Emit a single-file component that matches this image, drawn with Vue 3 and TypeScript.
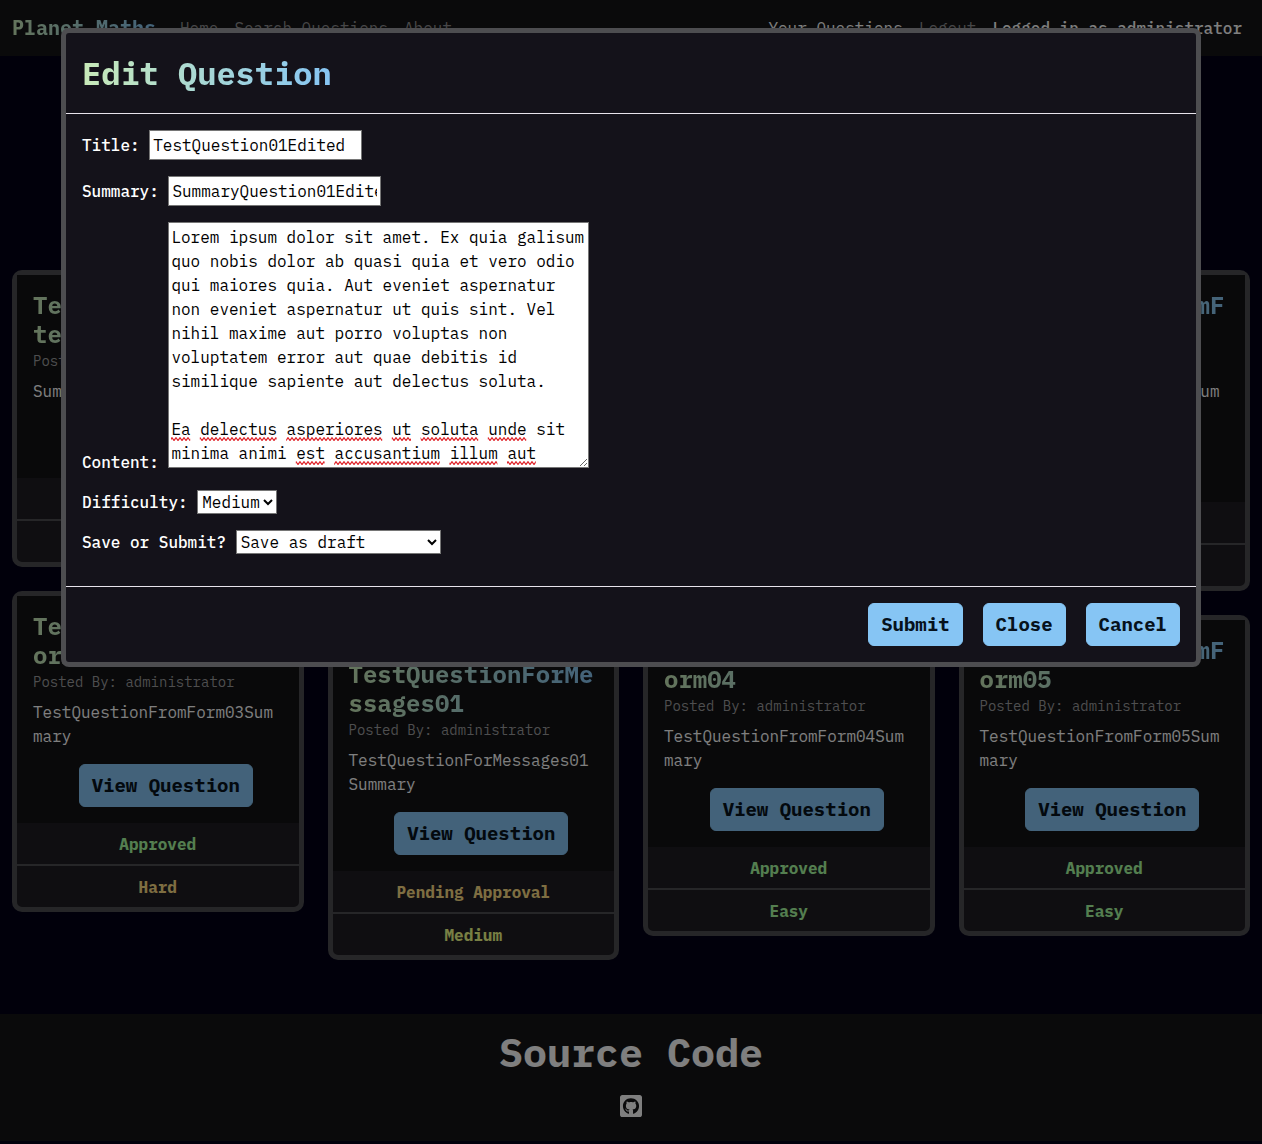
<script setup lang="ts">
import { ref } from 'vue'

type Tone = 'green' | 'yellow' | 'lime'

interface Question {
  title: string
  summary: string
  status: string
  statusTone: Tone
  difficulty: string
  difficultyTone: Tone
}

function question(
  title: string,
  summary: string,
  difficulty: string,
  difficultyTone: Tone,
  status = 'Approved',
  statusTone: Tone = 'green',
): Question {
  return { title, summary, status, statusTone, difficulty, difficultyTone }
}

const columns: Question[][] = [
  [
    question('TestQuestion01Edited', 'SummaryQuestion01Edited', 'Medium', 'lime'),
    question('TestQuestionFromForm03', 'TestQuestionFromForm03Summary', 'Hard', 'yellow'),
  ],
  [
    question('TestQuestionFromForm', 'TestQuestionFromFormSummary for the TestQuestionFromForm', 'Easy', 'green'),
    question('TestQuestionForMessages01', 'TestQuestionForMessages01 Summary', 'Medium', 'lime', 'Pending Approval', 'yellow'),
  ],
  [
    question('TestQuestionFromForm01', 'TestQuestionFromForm01Summary', 'Easy', 'green'),
    question('TestQuestionFromForm04', 'TestQuestionFromForm04Summary', 'Easy', 'green'),
  ],
  [
    question('TestQuestionFromForm02', 'TestQuestionFromForm02Summary', 'Easy', 'green'),
    question('TestQuestionFromForm05', 'TestQuestionFromForm05Summary', 'Easy', 'green'),
  ],
]

const title = ref('TestQuestion01Edited')
const summary = ref('SummaryQuestion01Edited')
const difficulty = ref('Medium')
const saveMode = ref('Save as draft')

const lines = [
  'Lorem ipsum dolor sit amet. Ex quia galisum',
  'quo nobis dolor ab quasi quia et vero odio',
  'qui maiores quia. Aut eveniet aspernatur',
  'non eveniet aspernatur ut quis sint. Vel',
  'nihil maxime aut porro voluptas non',
  'voluptatem error aut quae debitis id',
  'similique sapiente aut delectus soluta.',
  '',
  'Ea delectus asperiores ut soluta unde sit',
  'minima animi est accusantium illum aut',
]
const content = ref(lines.join('\n'))

// Spell-check marks for the paragraph being edited.
const LINE = 24
const CHAR = 9.6
const flagged: Record<number, string[]> = {
  8: ['Ea', 'delectus', 'asperiores', 'ut', 'soluta', 'unde'],
  9: ['est', 'accusantium', 'illum', 'aut'],
}
const marks = Object.entries(flagged).flatMap(([row, words]) =>
  words.map((word) => ({
    key: row + word,
    x: ` ${lines[Number(row)]} `.indexOf(` ${word} `) * CHAR,
    y: Number(row) * LINE + 20,
    width: word.length * CHAR,
  })),
)
</script>

<template>
  <div class="page">
    <nav class="navbar">
      <a class="brand gradient" href="#">Planet Maths</a>
      <a class="nav-link" href="#">Home</a>
      <a class="nav-link" href="#">Search Questions</a>
      <a class="nav-link" href="#">About</a>
      <div class="nav-right">
        <a class="nav-link active" href="#">Your Questions</a>
        <a class="nav-link" href="#">Logout</a>
        <span class="nav-link active user">Logged in as administrator</span>
      </div>
    </nav>

    <main class="questions">
      <div v-for="(column, i) in columns" :key="i" class="column">
        <article v-for="q in column" :key="q.title" class="card">
          <div class="card-body">
            <h2 class="card-title gradient">{{ q.title }}</h2>
            <p class="posted">Posted By: administrator</p>
            <p class="card-text">{{ q.summary }}</p>
            <div class="card-action">
              <button type="button" class="btn">View Question</button>
            </div>
          </div>
          <div class="card-row" :class="q.statusTone">{{ q.status }}</div>
          <div class="card-row" :class="q.difficultyTone">{{ q.difficulty }}</div>
        </article>
      </div>
    </main>

    <footer class="footer">
      <h1>Source Code</h1>
      <a class="github" href="#" aria-label="GitHub">
        <svg viewBox="0 0 448 448" width="22" height="22">
          <path
            fill="currentColor"
            d="M400 0H48C21.500 0 0 21.500 0 48v352c0 26.500 21.500 48 48 48h352c26.500 0 48-21.500 48-48V48c0-26.500-21.500-48-48-48zM277.300 383.700c-8.400 1.500-11.500-3.700-11.500-8 0-5.400.2-33 .2-55.300 0-15.600-5.200-25.500-11.300-30.700 37-4.100 76-9.200 76-73.100 0-18.200-6.500-27.300-17.100-39 1.700-4.300 7.400-22-1.700-45-13.900-4.300-45.700 17.900-45.700 17.900-13.200-3.700-27.500-5.600-41.600-5.600-14.100 0-28.400 1.900-41.600 5.600 0 0-31.800-22.200-45.700-17.900-9.100 22.900-3.500 40.600-1.700 45-10.600 11.700-15.600 20.800-15.600 39 0 63.600 37.300 69 74.300 73.100-4.800 4.300-9.100 11.700-10.600 22.300-9.500 4.300-33.800 11.700-48.300-13.900-9.100-15.800-25.500-17.100-25.500-17.100-16.200-.2-1.100 10.200-1.100 10.200 10.800 5 18.400 24.200 18.400 24.200 9.700 29.700 56.100 19.700 56.100 19.700 0 13.900.2 36.500.2 40.600 0 4.300-3 9.500-11.500 8-66-22.100-112.200-84.900-112.200-158.300 0-91.800 70.200-161.500 162-161.500S388 133.600 388 225.400c.1 73.400-44.700 136.300-110.700 158.300z"
          />
        </svg>
      </a>
    </footer>

    <div class="backdrop">
      <section class="modal" role="dialog" aria-labelledby="modal-title">
        <header class="modal-header">
          <h2 id="modal-title" class="modal-title gradient">Edit Question</h2>
        </header>
        <form id="edit-form" class="modal-body" @submit.prevent>
          <p>
            <label for="title">Title:</label>&#32;<input id="title" v-model="title" type="text" spellcheck="false" />
          </p>
          <p>
            <label for="summary">Summary:</label>&#32;<input id="summary" v-model="summary" type="text" spellcheck="false" />
          </p>
          <p>
            <label for="content">Content:</label>&#32;<span class="editor"><textarea id="content" v-model="content" rows="10" spellcheck="false"></textarea><svg class="squiggles" width="415" height="242" aria-hidden="true">
              <defs>
                <pattern id="wave" width="4" height="4" patternUnits="userSpaceOnUse">
                  <path d="M-1 -.5L1 3L3 .5L5 3M-1 3L1 .5L3 3L5 .5" fill="none" stroke="none" />
                  <path d="M-1 3.500L1 .7L3 3.500L5 .7" fill="none" stroke="#e0262c" stroke-width="1.200" />
                </pattern>
              </defs>
              <rect v-for="m in marks" :key="m.key" :x="m.x" :y="m.y" :width="m.width" height="4" fill="url(#wave)" />
            </svg></span>
          </p>
          <p>
            <label for="difficulty">Difficulty:</label>&#32;<select id="difficulty" v-model="difficulty">
              <option>Easy</option>
              <option>Medium</option>
              <option>Hard</option>
            </select>
          </p>
          <p>
            <label for="save-mode">Save or Submit?</label>&#32;<select id="save-mode" v-model="saveMode">
              <option>Save as draft</option>
              <option>Submit for approval</option>
            </select>
          </p>
        </form>
        <div class="modal-footer">
          <button type="submit" form="edit-form" class="btn">Submit</button>
          <button type="button" class="btn">Close</button>
          <button type="button" class="btn">Cancel</button>
        </div>
      </section>
    </div>
  </div>
</template>

<style>
body {
  margin: 0;
  background: #020016;
}
</style>

<style scoped>
.page,
.page * {
  box-sizing: border-box;
}

.page {
  font-family: "IBM Plex Mono", "Liberation Mono", monospace;
  font-size: 16px;
  line-height: 24px;
  color: #fff;
}

h1,
h2,
p {
  margin: 0;
}

a {
  color: inherit;
  text-decoration: none;
}

.gradient {
  color: transparent;
  background: linear-gradient(to right, #c8e9b8, #86c5f4);
  -webkit-background-clip: text;
  background-clip: text;
}

.navbar {
  display: flex;
  align-items: center;
  height: 56px;
  padding: 0 12px;
  background: #141416;
}

.brand {
  margin-right: 16px;
  font-size: 20px;
  font-weight: 700;
}

.nav-link {
  padding: 0 8px;
  color: #8e8e90;
}

.nav-link.active {
  color: #fff;
}

.user,
label {
  font-weight: 500;
}

.nav-right {
  display: flex;
  margin-left: auto;
}

.questions {
  display: grid;
  grid-template-columns: repeat(4, minmax(0, 1fr));
  gap: 24px;
  padding: 214px 12px 54px;
}

.column {
  display: flex;
  flex-direction: column;
  gap: 24px;
}

.card {
  border: 5px solid #4c4c50;
  border-radius: 10px;
  background: #1e1d22;
  overflow-wrap: anywhere;
}

.card-body {
  padding: 16px;
  background: #121214;
}

.card-title {
  font-size: 24px;
  line-height: 29px;
  font-weight: 700;
}

.posted {
  margin-bottom: 6px;
  font-size: 14px;
  line-height: 24px;
  color: #9c9c9e;
}

.card-action {
  display: flex;
  justify-content: center;
  padding: 16px 0 0 16px;
}

.card-row {
  padding: 9px 8px 8px;
  font-weight: 700;
  text-align: center;
}

.card-row + .card-row {
  border-top: 2px solid #4c4c50;
}

.green {
  color: #a8fca0;
}

.yellow {
  color: #fcdc84;
}

.lime {
  color: #f0ff88;
}

.btn {
  height: 43px;
  padding: 0 12px 2px;
  border: 1px solid #86c5f4;
  border-radius: 6px;
  background: #86c5f4;
  color: #06121c;
  font-family: inherit;
  font-size: 19px;
  font-weight: 700;
  line-height: 24px;
  white-space: nowrap;
  cursor: pointer;
}

.footer {
  display: flex;
  flex-direction: column;
  align-items: center;
  gap: 19px;
  padding: 14px 12px 24px;
  background: #141416;
}

.footer h1 {
  font-size: 40px;
  line-height: 48px;
  font-weight: 700;
}

.github {
  display: flex;
}

.backdrop {
  position: fixed;
  inset: 0;
  padding: 28px 12px;
  background: rgba(0, 0, 0, 0.5);
}

.modal {
  max-width: 1140px;
  margin: 0 auto;
  border: 5px solid #4d4d50;
  border-radius: 8px;
  background: #14121a;
}

.modal-header {
  display: flex;
  padding: 16px;
  border-bottom: 1px solid #e8e4ec;
}

.modal-title {
  font-size: 32px;
  line-height: 48px;
  font-weight: 700;
}

.modal-body {
  padding: 16px;
}

.modal-body p {
  margin-bottom: 16px;
}

input,
textarea,
select {
  margin: 0;
  border: 1px solid #767676;
  border-radius: 0;
  background: #fff;
  color: #000;
  font: inherit;
}

input {
  width: 213px;
  height: 30px;
  padding: 2px 3px;
}

.editor {
  position: relative;
  display: inline-block;
}

textarea {
  width: 421px;
  height: 246px;
  padding: 2px;
  resize: both;
  overflow: hidden;
}

.squiggles {
  position: absolute;
  top: 3px;
  left: 3px;
  pointer-events: none;
}

select {
  height: 24px;
  padding: 0;
}

.modal-footer {
  display: flex;
  justify-content: flex-end;
  gap: 20px;
  padding: 16px;
  border-top: 1px solid #e8e4ec;
}
</style>
